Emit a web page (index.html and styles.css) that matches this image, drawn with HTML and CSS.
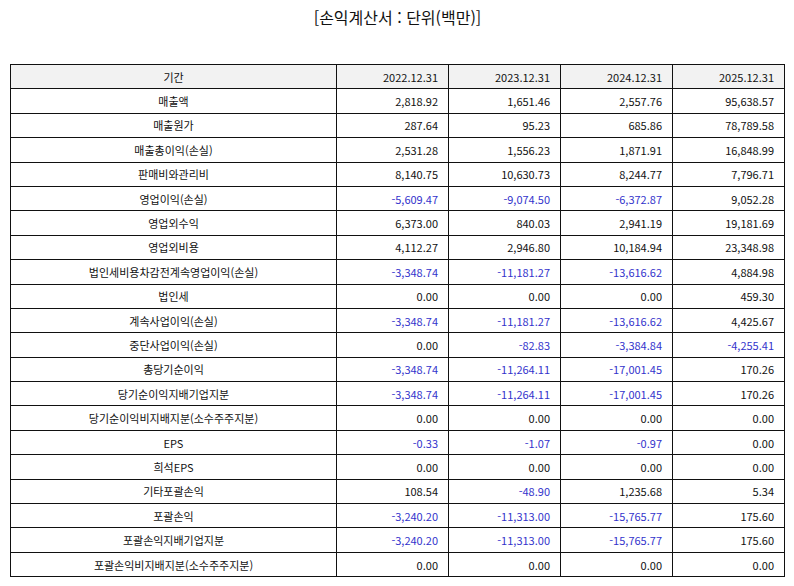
FILE: index.html
```html
<!DOCTYPE html>
<html lang="ko">
<head>
<meta charset="utf-8">
<link rel="stylesheet" href="styles.css">
</head>
<body>
<div class="page">
<h1 class="title">[손익계산서 : 단위(백만)]</h1>
<table class="fs">
<colgroup><col class="c-label"><col class="c-num"><col class="c-num"><col class="c-num"><col class="c-num"></colgroup>
<thead>
<tr><th class="label">기간</th><th>2022.12.31</th><th>2023.12.31</th><th>2024.12.31</th><th>2025.12.31</th></tr>
</thead>
<tbody>
<tr><td class="label">매출액</td><td>2,818.92</td><td>1,651.46</td><td>2,557.76</td><td>95,638.57</td></tr>
<tr><td class="label">매출원가</td><td>287.64</td><td>95.23</td><td>685.86</td><td>78,789.58</td></tr>
<tr><td class="label">매출총이익(손실)</td><td>2,531.28</td><td>1,556.23</td><td>1,871.91</td><td>16,848.99</td></tr>
<tr><td class="label">판매비와관리비</td><td>8,140.75</td><td>10,630.73</td><td>8,244.77</td><td>7,796.71</td></tr>
<tr><td class="label">영업이익(손실)</td><td class="neg">-5,609.47</td><td class="neg">-9,074.50</td><td class="neg">-6,372.87</td><td>9,052.28</td></tr>
<tr><td class="label">영업외수익</td><td>6,373.00</td><td>840.03</td><td>2,941.19</td><td>19,181.69</td></tr>
<tr><td class="label">영업외비용</td><td>4,112.27</td><td>2,946.80</td><td>10,184.94</td><td>23,348.98</td></tr>
<tr><td class="label">법인세비용차감전계속영업이익(손실)</td><td class="neg">-3,348.74</td><td class="neg">-11,181.27</td><td class="neg">-13,616.62</td><td>4,884.98</td></tr>
<tr><td class="label">법인세</td><td>0.00</td><td>0.00</td><td>0.00</td><td>459.30</td></tr>
<tr><td class="label">계속사업이익(손실)</td><td class="neg">-3,348.74</td><td class="neg">-11,181.27</td><td class="neg">-13,616.62</td><td>4,425.67</td></tr>
<tr><td class="label">중단사업이익(손실)</td><td>0.00</td><td class="neg">-82.83</td><td class="neg">-3,384.84</td><td class="neg">-4,255.41</td></tr>
<tr><td class="label">총당기순이익</td><td class="neg">-3,348.74</td><td class="neg">-11,264.11</td><td class="neg">-17,001.45</td><td>170.26</td></tr>
<tr><td class="label">당기순이익지배기업지분</td><td class="neg">-3,348.74</td><td class="neg">-11,264.11</td><td class="neg">-17,001.45</td><td>170.26</td></tr>
<tr><td class="label">당기순이익비지배지분(소수주주지분)</td><td>0.00</td><td>0.00</td><td>0.00</td><td>0.00</td></tr>
<tr><td class="label">EPS</td><td class="neg">-0.33</td><td class="neg">-1.07</td><td class="neg">-0.97</td><td>0.00</td></tr>
<tr><td class="label">희석EPS</td><td>0.00</td><td>0.00</td><td>0.00</td><td>0.00</td></tr>
<tr><td class="label">기타포괄손익</td><td>108.54</td><td class="neg">-48.90</td><td>1,235.68</td><td>5.34</td></tr>
<tr><td class="label">포괄손익</td><td class="neg">-3,240.20</td><td class="neg">-11,313.00</td><td class="neg">-15,765.77</td><td>175.60</td></tr>
<tr><td class="label">포괄손익지배기업지분</td><td class="neg">-3,240.20</td><td class="neg">-11,313.00</td><td class="neg">-15,765.77</td><td>175.60</td></tr>
<tr><td class="label">포괄손익비지배지분(소수주주지분)</td><td>0.00</td><td>0.00</td><td>0.00</td><td>0.00</td></tr>
</tbody>
</table>
</div>
</body>
</html>
```

FILE: styles.css
```css
html, body {
  margin: 0;
  padding: 0;
  background: #ffffff;
}
body {
  font-family: "Noto Sans CJK KR", "Noto Sans", sans-serif;
  color: #111111;
}
.page {
  padding: 0 9px 0 10px;
}
.title {
  margin: 0;
  padding-top: 6px;
  height: 64px;
  box-sizing: border-box;
  font-size: 16px;
  font-weight: normal;
  line-height: 22px;
  text-align: center;
  color: #111111;
}
.fs {
  width: 775px;
  border-collapse: collapse;
  table-layout: fixed;
  font-size: 11px;
}
.c-label { width: 326px; }
.c-num { width: 112px; }
.fs th, .fs td {
  border: 1px solid #111111;
  height: 23.4px;
  padding: 0 10px 0 4px;
  text-align: right;
  font-weight: normal;
  line-height: 14px;
  white-space: nowrap;
}
.fs th {
  background: #f2f2f2;
}
.fs .label {
  text-align: center;
  padding: 0 4px;
}
.fs .neg {
  color: #3333cc;
}
```
